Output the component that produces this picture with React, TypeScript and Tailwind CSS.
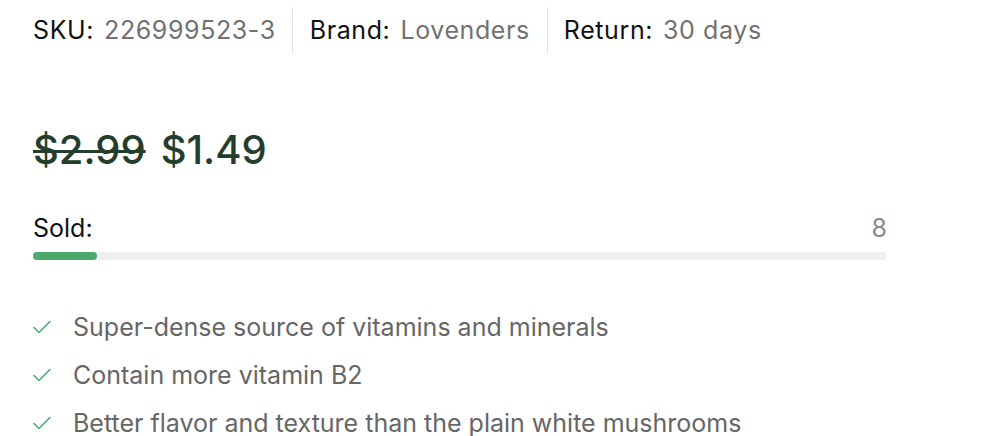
import React from 'react';

const features = [
  'Super-dense source of vitamins and minerals',
  'Contain more vitamin B2',
  'Better flavor and texture than the plain white mushrooms',
];

function Check() {
  return (
    <svg width="18" height="14" viewBox="0 0 18 14" fill="none" className="shrink-0">
      <path d="M1 7.5 L6 12.5 L17 1.5" stroke="#4caa6b" strokeWidth="1.6" strokeLinecap="round" strokeLinejoin="round" />
    </svg>
  );
}

export default function App() {
  return (
    <div className="w-[992px] h-[436px] bg-white px-[33px] overflow-hidden" style={{ fontFamily: 'Inter, "Noto Sans", sans-serif' }}>
      <div className="flex items-stretch pt-[7px] h-[54px] text-[25px] leading-none tracking-[0.6px]">
        <div className="flex items-center gap-[10px] pr-[16px] border-r border-[#e6e6e6]">
          <span className="text-[#111]">SKU:</span>
          <span className="text-[#717171]">226999523-3</span>
        </div>
        <div className="flex items-center gap-[10px] px-[17px] border-r border-[#e6e6e6]">
          <span className="text-[#111]">Brand:</span>
          <span className="text-[#717171]">Lovenders</span>
        </div>
        <div className="flex items-center gap-[10px] pl-[16px]">
          <span className="text-[#111]">Return:</span>
          <span className="text-[#717171]">30 days</span>
        </div>
      </div>

      <div className="flex items-center gap-[15px] mt-[71px] h-[50px] text-[40px] leading-none font-medium text-[#253d2c]">
        <span className="line-through decoration-[3px]">$2.99</span>
        <span>$1.49</span>
      </div>

      <div className="w-[854px] mt-[41px]">
        <div className="flex justify-between items-center h-[24px] text-[25px] leading-none">
          <span className="text-[#111]">Sold:</span>
          <span className="text-[#888]">8</span>
        </div>
        <div className="mt-[12px] h-[8px] rounded-full bg-[#f0f0f0]">
          <div className="h-full w-[64px] rounded-full bg-[#4caa6b]" />
        </div>
      </div>

      <ul className="mt-[55px] flex flex-col gap-[24px]">
        {features.map((f) => (
          <li key={f} className="flex items-center gap-[22px] h-[24px] text-[25px] leading-none text-[#666]">
            <Check />
            <span>{f}</span>
          </li>
        ))}
      </ul>
    </div>
  );
}
